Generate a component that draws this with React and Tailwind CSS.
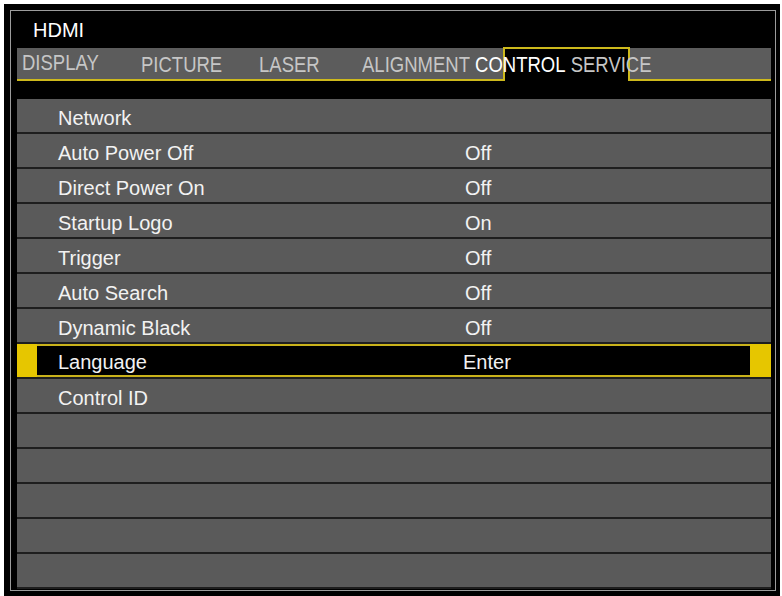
import React from 'react';

const rows = [
  { label: 'Network', value: '' },
  { label: 'Auto Power Off', value: 'Off' },
  { label: 'Direct Power On', value: 'Off' },
  { label: 'Startup Logo', value: 'On' },
  { label: 'Trigger', value: 'Off' },
  { label: 'Auto Search', value: 'Off' },
  { label: 'Dynamic Black', value: 'Off' },
  { label: 'Language', value: 'Enter', active: true },
  { label: 'Control ID', value: '' },
  { label: '', value: '' },
  { label: '', value: '' },
  { label: '', value: '' },
  { label: '', value: '' },
  { label: '', value: '' },
];

function TabLabel({ children, className = '' }) {
  return <span className={`inline-block scale-y-[1.22] ${className}`}>{children}</span>;
}

export default function App() {
  return (
    <div
      className="w-[782px] h-[596px] overflow-hidden bg-white pl-[4px] pt-[4px]"
      style={{ fontFamily: '"Liberation Sans", Arial, sans-serif' }}
    >
      <div className="w-[776px] h-[592px] bg-black pl-[6px] pt-[6px] pr-[4px]">
        <div className="border border-[#9c9c9c] bg-black pl-[6px] pr-[4px] pb-[1px]">
          {/* header */}
          <div className="h-[37px] flex items-center pl-[16px] text-[20px] text-white">HDMI</div>

          {/* tab bar */}
          <div className="relative h-[33px] bg-[#5c5c5c] border-b-2 border-[#cdb91c] flex items-center text-[18.5px] text-[#c6c6c6] leading-none whitespace-nowrap">
            <div className="absolute left-[486px] w-[127px] -top-[1px] -bottom-[2px] bg-black border-2 border-b-0 border-[#cdb91c]" />
            <div className="relative z-10 flex items-center pl-[5px] pt-[4px]">
              <span className="w-[119px] -translate-y-[2px]">
                <TabLabel>DISPLAY</TabLabel>
              </span>
              <span className="w-[118px]">
                <TabLabel>PICTURE</TabLabel>
              </span>
              <span className="w-[103px]">
                <TabLabel>LASER</TabLabel>
              </span>
              <span>
                <TabLabel>ALIGNMENT</TabLabel>{' '}
                <TabLabel className="text-white">CONTROL</TabLabel>{' '}
                <TabLabel>SERVICE</TabLabel>
              </span>
            </div>
          </div>

          {/* menu rows */}
          <div className="mt-[18px] flex flex-col text-[20px] text-[#f2f2f2] leading-none">
            {rows.map((row, i) =>
              row.active ? (
                <div key={i} className="h-[35px] flex border-b-2 border-[#1e1e1e]">
                  <div className="w-[20px] bg-[#e6c600]" />
                  <div className="flex-1 flex items-center pt-[3px] bg-black border-y-2 border-[#c9b21a]">
                    <span className="w-[428px] pl-[21px]">{row.label}</span>
                    <span className="-ml-[2px]">{row.value}</span>
                  </div>
                  <div className="w-[21px] bg-[#e6c600]" />
                </div>
              ) : (
                <div
                  key={i}
                  className="h-[35px] flex items-center pt-[4px] bg-[#5a5a5a] border-b-2 border-[#1e1e1e]"
                >
                  <span className="w-[448px] pl-[41px]">{row.label}</span>
                  <span>{row.value}</span>
                </div>
              )
            )}
          </div>
        </div>
      </div>
    </div>
  );
}
